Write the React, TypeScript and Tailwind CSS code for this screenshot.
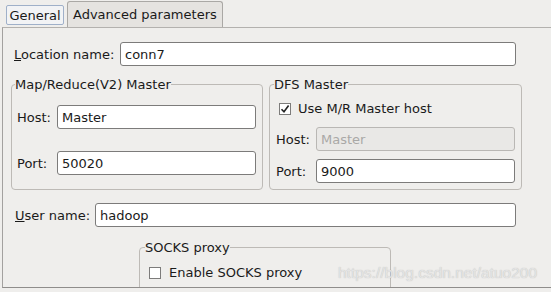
import type { ReactNode } from "react";

function TextInput({ value, width, disabled }: { value: string; width: string; disabled?: boolean }) {
  return (
    <div
      className={`flex h-[24px] items-center rounded-[3px] border pl-[4px] ${width} ${
        disabled
          ? "border-[#b9b7b4] bg-[#e9e8e6] text-[#a9a8a6]"
          : "border-[#7c7b7a] bg-white text-[#1a1a1a]"
      }`}
    >
      {value}
    </div>
  );
}

function Check({ checked }: { checked?: boolean }) {
  return (
    <div className="flex h-[12px] w-[12px] items-center justify-center border border-[#7d7c7b] bg-white">
      {checked && (
        <svg width="10" height="10" viewBox="0 0 10 10">
          <path d="M1.5 5.2 L4 7.8 L8.6 1.6" fill="none" stroke="#222" strokeWidth="1.6" />
        </svg>
      )}
    </div>
  );
}

function Group({ title, width, height, legendMl, children }: {
  title: string;
  width: string;
  height: string;
  legendMl: string;
  children: ReactNode;
}) {
  return (
    <fieldset className={`rounded-[4px] border border-[#bdbab6] ${width} ${height}`}>
      <legend className={`${legendMl} px-0 leading-[15px]`}>{title}</legend>
      {children}
    </fieldset>
  );
}

export default function App() {
  return (
    <div
      className="relative h-[292px] w-[551px] overflow-hidden bg-[#efeeec] text-[13px] leading-[15px] text-[#1a1a1a]"
      style={{ fontFamily: '"DejaVu Sans", Verdana, sans-serif' }}
    >
      {/* tabs */}
      <div className="flex h-[27px] items-start gap-[3px] pl-[6px]">
        <div className="mt-[5px] flex h-[20px] w-[58px] items-center justify-center rounded-[2px] border border-[#9fb0c9] bg-[#f2f3f5]">
          General
        </div>
        <div className="mt-[1px] flex h-[26px] w-[156px] items-center rounded-t-[3px] border border-b-0 border-[#aaa8a5] bg-[#e5e3e0] pl-[5px]">
          Advanced parameters
        </div>
      </div>

      {/* page */}
      <div className="ml-[2px] h-[261px] overflow-hidden border-t border-b border-l border-t-[#b3b1ae] border-b-[#8f8d8b] border-l-[#a3a19f]">
        <div className="flex items-center pl-[11px] pt-[14px]">
          <span className="w-[106px]">
            <span className="underline">L</span>ocation name:
          </span>
          <TextInput value="conn7" width="w-[396px]" />
        </div>

        <div className="mt-[11px] flex gap-[6px] pl-[8px]">
          <Group title="Map/Reduce(V2) Master" width="w-[252px]" height="h-[113px]" legendMl="ml-[3px]">
            <div className="mt-[13px] flex flex-col gap-[22px] pl-[5px]">
              <div className="flex items-center">
                <span className="w-[40px]">Host:</span>
                <TextInput value="Master" width="w-[199px]" />
              </div>
              <div className="flex items-center">
                <span className="w-[40px]">Port:</span>
                <TextInput value="50020" width="w-[199px]" />
              </div>
            </div>
          </Group>

          <Group title="DFS Master" width="w-[253px]" height="h-[113px]" legendMl="ml-[4px]">
            <div className="mt-[9px] flex flex-col pl-[6px]">
              <div className="ml-[3px] flex h-[15px] items-center gap-[7px]">
                <Check checked />
                <span>Use M/R Master host</span>
              </div>
              <div className="mt-[11px] flex items-center">
                <span className="w-[40px]">Host:</span>
                <TextInput value="Master" width="w-[199px]" disabled />
              </div>
              <div className="mt-[8px] flex items-center">
                <span className="w-[40px]">Port:</span>
                <TextInput value="9000" width="w-[199px]" />
              </div>
            </div>
          </Group>
        </div>

        <div className="mt-[13px] flex items-center pl-[12px]">
          <span className="w-[80px]">
            <span className="underline">U</span>ser name:
          </span>
          <TextInput value="hadoop" width="w-[421px]" />
        </div>

        <div className="mt-[13px] pl-[136px]">
          <Group title="SOCKS proxy" width="w-[252px]" height="h-[80px]" legendMl="ml-[5px]">
            <div className="mt-[10px] flex h-[15px] items-center gap-[8px] pl-[9px]">
              <Check />
              <span>Enable SOCKS proxy</span>
            </div>
          </Group>
        </div>
      </div>

      <div
        className="absolute left-[338px] top-[264px] text-[15.5px] leading-[18px] text-[#e4e4e4]"
        style={{ fontFamily: '"Liberation Sans", Arial, sans-serif', textShadow: "0 0 1px rgba(120,120,120,0.45)" }}
      >
        https://blog.csdn.net/atuo200
      </div>
    </div>
  );
}
